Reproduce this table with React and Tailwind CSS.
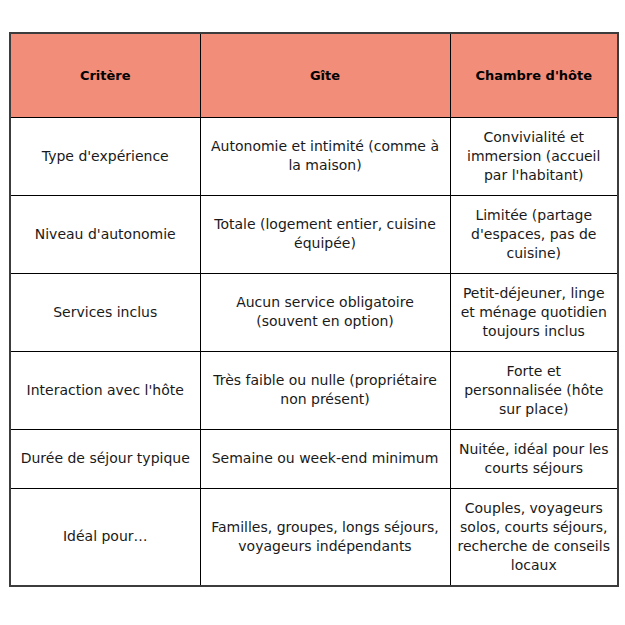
import React from 'react';

const rows = [
  [["Type d'expérience"], ['Autonomie et intimité (comme à', 'la maison)'], ['Convivialité et', 'immersion (accueil', "par l'habitant)"]],
  [["Niveau d'autonomie"], ['Totale (logement entier, cuisine', 'équipée)'], ['Limitée (partage', "d'espaces, pas de", 'cuisine)']],
  [['Services inclus'], ['Aucun service obligatoire', '(souvent en option)'], ['Petit-déjeuner, linge', 'et ménage quotidien', 'toujours inclus']],
  [["Interaction avec l'hôte"], ['Très faible ou nulle (propriétaire', 'non présent)'], ['Forte et', 'personnalisée (hôte', 'sur place)']],
  [['Durée de séjour typique'], ['Semaine ou week-end minimum'], ['Nuitée, idéal pour les', 'courts séjours']],
  [['Idéal pour…'], ['Familles, groupes, longs séjours,', 'voyageurs indépendants'], ['Couples, voyageurs', 'solos, courts séjours,', 'recherche de conseils', 'locaux']],
];

const Cell = ({ lines }) => (
  <td className="border border-black px-1 py-[10px] text-center align-middle">
    {lines.map((line) => (
      <div key={line} className="whitespace-nowrap">{line}</div>
    ))}
  </td>
);

export default function App() {
  return (
    <div
      className="min-h-[625px] w-[625px] bg-white pl-[9px] pt-[32px] text-[14px] leading-[19px] text-[#1a1a1a]"
      style={{ fontFamily: '"DejaVu Sans", "Liberation Sans", sans-serif' }}
    >
      <table className="w-[608px] table-fixed border-collapse border-2 border-[#3c3c3c]">
        <colgroup>
          <col className="w-[190px]" />
          <col className="w-[250px]" />
          <col className="w-[168px]" />
        </colgroup>
        <thead>
          <tr className="h-[84px] bg-[#f28d79] text-[13px]">
            <th className="border border-black font-bold text-black">Critère</th>
            <th className="border border-black font-bold text-black">Gîte</th>
            <th className="border border-black font-bold text-black">Chambre d'hôte</th>
          </tr>
        </thead>
        <tbody>
          {rows.map((row, i) => (
            <tr key={i}>
              {row.map((lines, j) => (
                <Cell key={j} lines={lines} />
              ))}
            </tr>
          ))}
        </tbody>
      </table>
    </div>
  );
}
